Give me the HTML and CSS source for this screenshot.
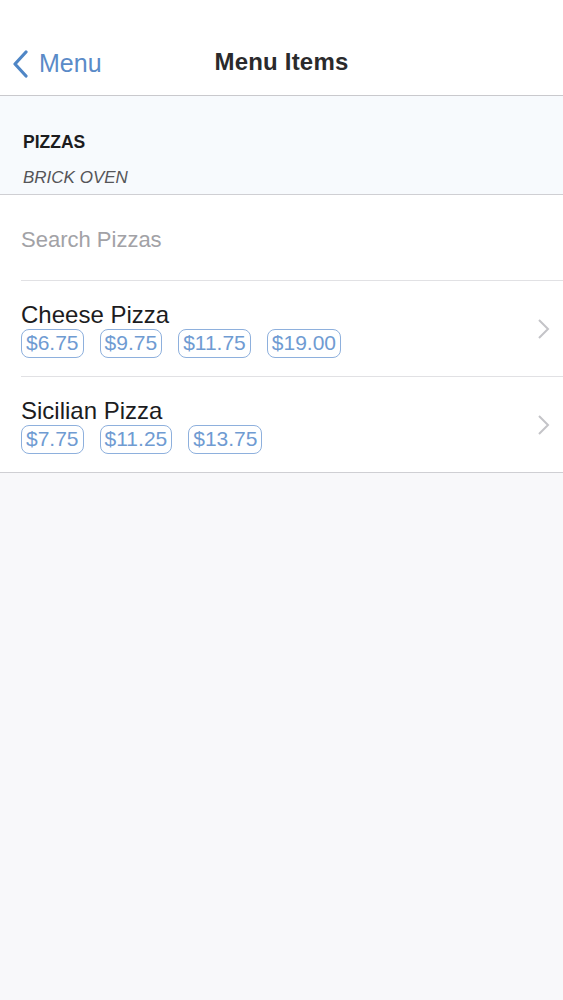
FILE: index.html
```html
<!DOCTYPE html>
<html lang="en">
<head>
    <meta charset="UTF-8">
    <meta name="viewport" content="width=device-width, initial-scale=1.0">
    <title>Menu Items</title>
    <link rel="stylesheet" href="styles.css">
</head>
<body>
    <div class="navbar">
        <a class="back" href="#">
            <svg class="back-icon" width="20" height="28" viewBox="0 0 20 28">
                <path d="M15 2 L4 14 L15 26" fill="none" stroke="#4f86c6" stroke-width="3.2" stroke-linecap="round" stroke-linejoin="round"/>
            </svg>
            <span>Menu</span>
        </a>
        <h1 class="title">Menu Items</h1>
    </div>

    <div class="section-header">
        <div class="section-name">PIZZAS</div>
        <div class="section-sub">BRICK OVEN</div>
    </div>

    <ul class="list">
        <li class="search-row">
            <input type="text" class="search" placeholder="Search Pizzas">
        </li>
        <li class="item">
            <div class="item-body">
                <div class="item-name">Cheese Pizza</div>
                <div class="prices">
                    <span class="price">$6.75</span>
                    <span class="price">$9.75</span>
                    <span class="price">$11.75</span>
                    <span class="price">$19.00</span>
                </div>
            </div>
            <svg class="chevron" width="14" height="22" viewBox="0 0 14 22">
                <path d="M3 2 L12 11 L3 20" fill="none" stroke="#c4c4c8" stroke-width="2"/>
            </svg>
        </li>
        <li class="item">
            <div class="item-body">
                <div class="item-name">Sicilian Pizza</div>
                <div class="prices">
                    <span class="price">$7.75</span>
                    <span class="price">$11.25</span>
                    <span class="price">$13.75</span>
                </div>
            </div>
            <svg class="chevron" width="14" height="22" viewBox="0 0 14 22">
                <path d="M3 2 L12 11 L3 20" fill="none" stroke="#c4c4c8" stroke-width="2"/>
            </svg>
        </li>
    </ul>
</body>
</html>
```

FILE: styles.css
```css
body {
    margin: 0;
    font-family: "Liberation Sans", Arial, sans-serif;
    background-color: #f8f8fa;
    color: #1c1c1e;
}
.navbar {
    position: relative;
    height: 95px;
    background-color: #ffffff;
    border-bottom: 1px solid #c9c9cd;
    display: flex;
    align-items: flex-end;
    justify-content: center;
}
.back {
    position: absolute;
    left: 11px;
    top: 49px;
    display: flex;
    align-items: center;
    gap: 8px;
    color: #5a8bc8;
    text-decoration: none;
    font-size: 25px;
}
.title {
    margin: 0 0 19px 0;
    font-size: 24px;
    font-weight: bold;
    color: #2a2a2c;
    letter-spacing: 0.2px;
}
.section-header {
    height: 99px;
    box-sizing: border-box;
    padding: 36px 23px 0;
    background-color: #f7fafd;
    border-bottom: 1px solid #cfcfd3;
}
.section-name {
    font-size: 17.5px;
    font-weight: bold;
    color: #1c1c1e;
}
.section-sub {
    margin-top: 15px;
    font-size: 17px;
    font-style: italic;
    color: #555558;
}
.list {
    list-style: none;
    margin: 0;
    padding: 0 0 0 21px;
    background-color: #ffffff;
    border-bottom: 1px solid #cfcfd3;
}
.search-row {
    height: 86px;
    display: flex;
    align-items: center;
    padding-top: 4px;
    box-sizing: border-box;
    border-bottom: 1px solid #e1e1e4;
}
.search {
    border: none;
    outline: none;
    padding: 0;
    width: 100%;
    font-family: inherit;
    font-size: 22px;
    color: #1c1c1e;
    background: transparent;
}
.search::placeholder {
    color: #a2a2a6;
}
.item {
    height: 95px;
    display: flex;
    align-items: center;
    padding-right: 13px;
    border-bottom: 1px solid #e1e1e4;
}
.item:last-child {
    border-bottom: none;
}
.item-body {
    flex: 1;
    padding-top: 2px;
}
.item-name {
    font-size: 24px;
    color: #1c1c1e;
    line-height: 28px;
}
.prices {
    display: flex;
    gap: 16px;
    margin-top: 0;
}
.price {
    display: inline-block;
    box-sizing: border-box;
    border: 1.5px solid #8eb0dd;
    border-radius: 8px;
    padding: 0 4px;
    height: 29px;
    line-height: 26px;
    font-size: 21px;
    color: #6f9bd2;
}
.chevron {
    display: block;
}
```
